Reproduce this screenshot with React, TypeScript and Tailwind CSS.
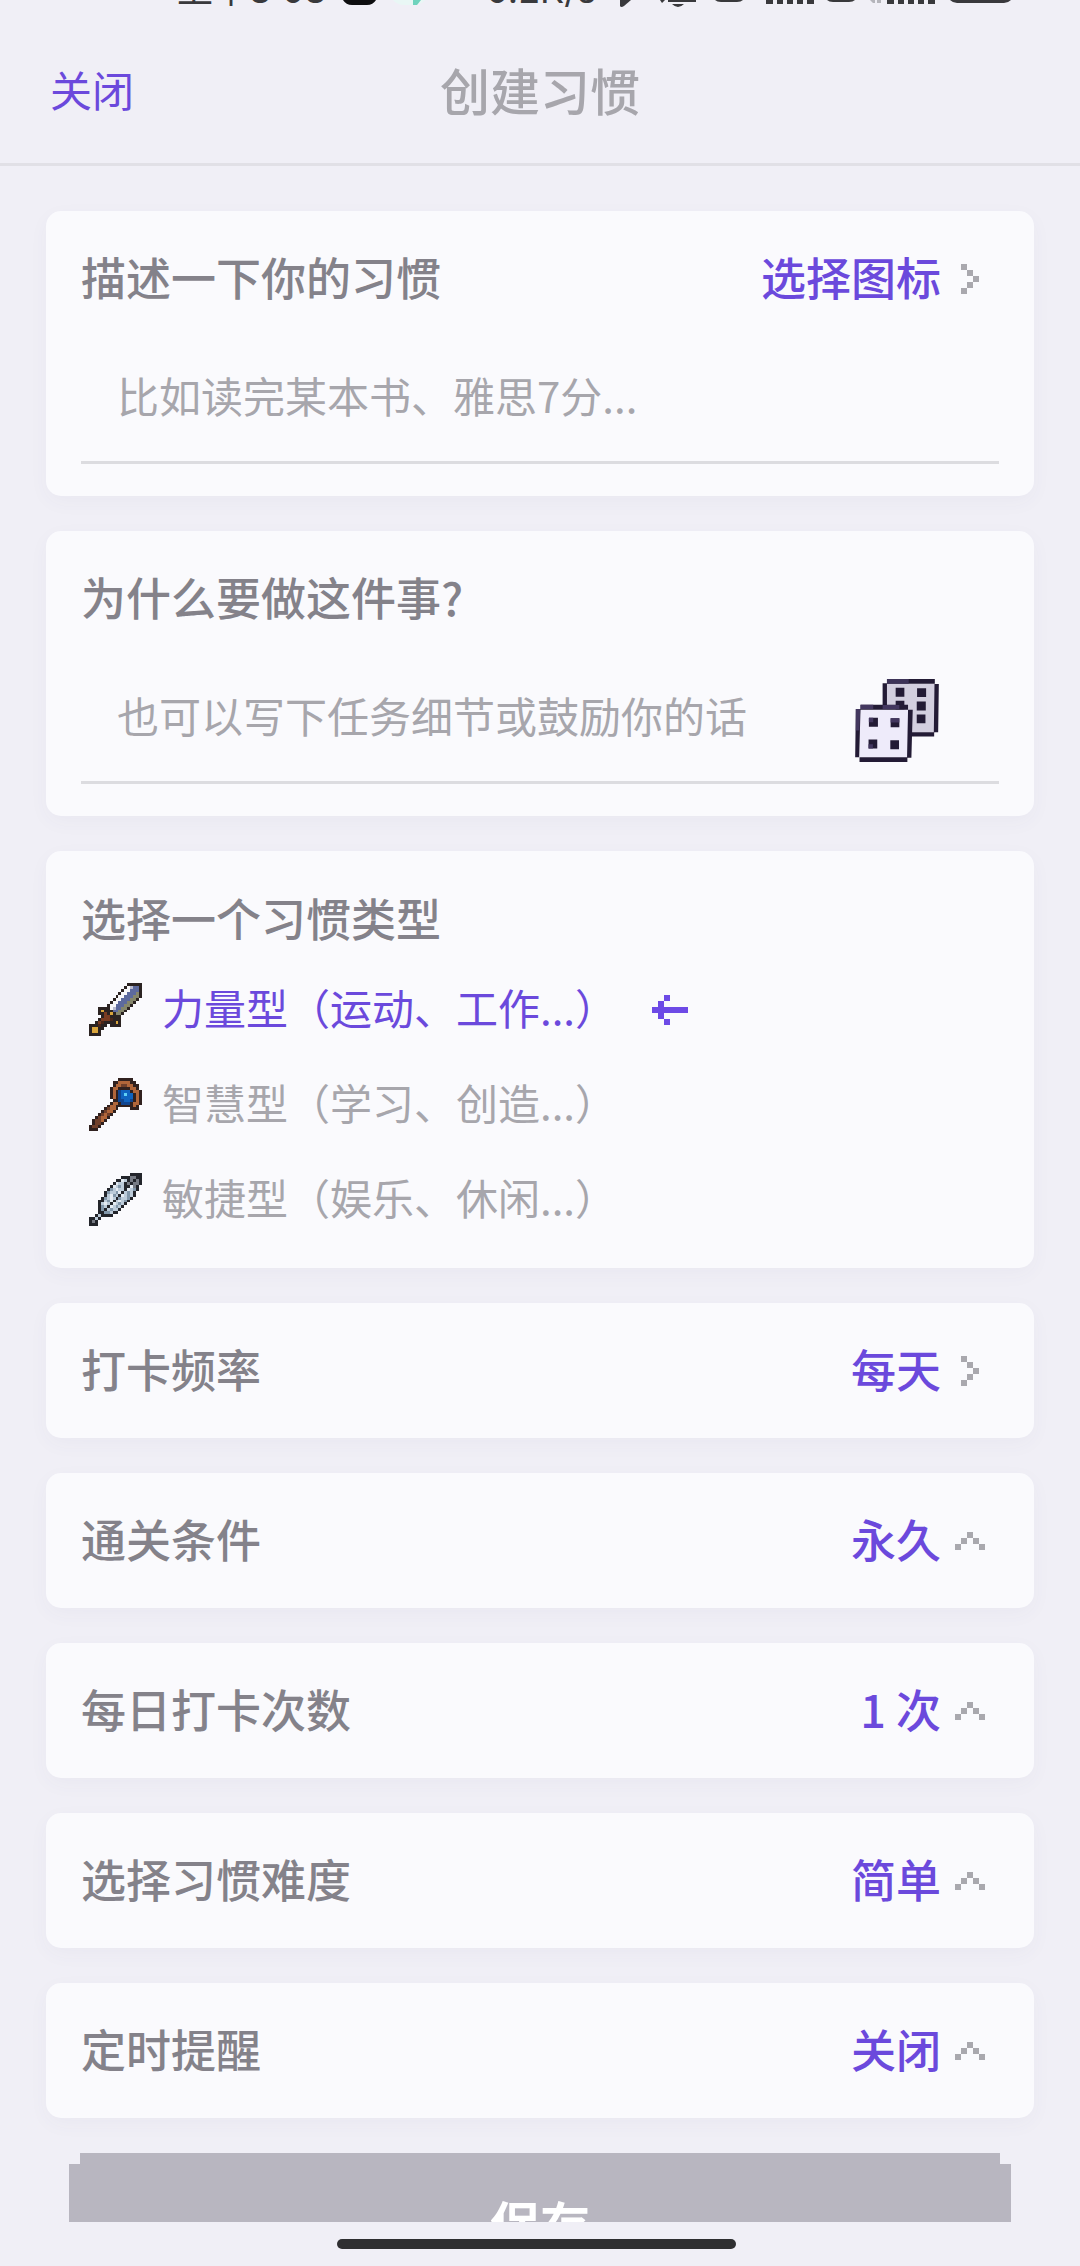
import React, { useState } from "react";

type Palette = Record<string, string>;

/* Draws a sprite from rows of characters; "." is transparent. */
function Sprite({ rows, palette, className }: { rows: string[]; palette: Palette; className: string }) {
  const width = Math.max(...rows.map((r) => r.length));
  return (
    <svg viewBox={`0 0 ${width} ${rows.length}`} className={className} shapeRendering="crispEdges" aria-hidden="true">
      {rows.flatMap((row, y) =>
        row.split("").map((c, x) =>
          c === "." ? null : <rect key={`${x}-${y}`} x={x} y={y} width={1} height={1} fill={palette[c]} />
        )
      )}
    </svg>
  );
}

const SWORD = [
  ".............KKKKK",
  "............KWLBBK",
  "...........KWWBBBK",
  "..........KWWBBBGK",
  ".........KWWBBBGGK",
  "........KWWBBBGGK.",
  ".......KWWBBBGGK..",
  "......KWWBBBGGK...",
  "...KKKKWLBBGGK....",
  "...KYKKKBBGGK.....",
  "...KKRKYKGGK......",
  "....KRRKKKK.......",
  "...KRRRDKKK.......",
  "..KRDKKKKYK.......",
  "KKKDKK.KKKK.......",
  "KYYKK.............",
  "KYYK..............",
  "KKKK..............",
];
const SWORD_COLORS: Palette = {
  K: "#2b2322", W: "#f8f8fa", L: "#b9bcd0", B: "#5d6a9e", G: "#85866c", Y: "#d9a53c", R: "#7a3c22", D: "#4a2618",
};

const STAFF = [
  "..........KKKKK...",
  "........KKOOOOKK..",
  "........KOONNOOKK.",
  ".......KOOKKKKOOK.",
  ".......KOKDBBBKOOK",
  ".......KOKDBCBBKOK",
  ".......KOKDBBBBKOK",
  "........KKDDBBDKOK",
  ".......KOOKDDDKOOK",
  "......KOOKKKKKKOK.",
  ".....KNOOK....KKK.",
  "....KNOOK.........",
  "...KNONK..........",
  "..KNOOK...........",
  ".KNNOK............",
  ".KNNK.............",
  "KNNK..............",
  "KKK...............",
];
const STAFF_COLORS: Palette = {
  K: "#30211f", O: "#b0663a", N: "#70402b", D: "#10458f", B: "#0f63bf", C: "#5fd0f5",
};

const FEATHER = [
  "..............KKKK",
  "...........KKKGGKK",
  ".........KKWLKGKGK",
  "........KWLLKGKGGK",
  ".......KWLSLKKWGK.",
  "......KSLWLLKWLSK.",
  ".....KSLLSWKLSLK..",
  ".....KLWSLKWLSLK..",
  "....KSLWLKSLLSK...",
  "...KKLSWKLWLSK....",
  "...KLWLKWLSLK.....",
  "...KSLKWLSLK......",
  "...KSKLSLLK.......",
  "...KKSSLKK........",
  "..KLKKKK..........",
  "KKLK..............",
  "KGK...............",
  "KKK...............",
];
const FEATHER_COLORS: Palette = { K: "#23252b", W: "#e4ebf2", L: "#bccbd9", S: "#8297aa", G: "#777b84" };

const GRAY: Palette = { X: "#a9a8ae" };
const VIOLET: Palette = { X: "#6d4ae6" };
const RIGHT = [".X...", "..X..", "...X.", "..X..", ".X..."];
const UP = [".....", "..X..", ".X.X.", "X...X", "....."];
const ARROW = ["..X...", ".X....", "XXXXXX", ".X....", "..X..."];

function Dice() {
  return (
    <svg viewBox="108 86 250 248" className="h-[83px] w-[84px]" aria-hidden="true">
      <rect x="203" y="100" width="143" height="146" fill="#d3cfdf" />
      <g fill="#231b35">
        <path d="M203 86H346V100H203zM190 99H203V175H190zM345 101H358L356 245H343zM270 245H344V258H270z" />
        <path d="M229 112H255V139H229zM293 114H320V140H293zM229 151H255V178H229zM292 153H319V180H292zM292 192H318V218H292z" />
      </g>
      <path d="M203 86H268V100H203z" fill="#3d3358" />
      <path d="M123 177H267L264 320H121z" fill="#eeebfa" />
      <g fill="#231b35">
        <path d="M124 163H266V178H124zM110 176H124L120 320H108zM266 178H280L276 321H263zM121 320H264V334H121z" />
        <path d="M149 202H176V229H149zM214 203H240V230H214zM148 267H174V294H148zM213 269H239V296H213z" />
      </g>
      <path d="M124 163H162V176H124zM190 164H240V176H190zM110 176H123L121 240H110zM149 202H162V215H149zM214 203H240V216H214zM148 281H161V294H148z" fill="#43375f" />
    </svg>
  );
}

function StatusIcons() {
  return (
    <svg viewBox="620 0 400 8" className="ml-[18px] h-[8px] w-[400px] shrink-0" fill="#39393c" aria-hidden="true">
      <path d="M623 0H634L627 6Q624 8 623 6z" />
      <path d="M663 0H668L665 3zM671 0H699V2H671zM675 4H687Q681 10 675 4z" />
      <path d="M718 0H746Q744 2 740 2H724Q720 2 718 0z" />
      <path d="M769 0H776V4H769zM780 0H786V4H780zM790 0H796V4H790zM800 0H806V4H800zM810 0H817V4H810z" />
      <path d="M830 0H858Q856 2 852 2H836Q832 2 830 0z" />
      <path d="M873 0H878V3H876zM880 0H884V3H880z" fill="#b5b5bb" />
      <path d="M890 0H897V4H890zM901 0H907V4H901zM911 0H917V4H911zM921 0H927V4H921zM931 0H938V4H931z" />
      <path d="M953 0H1014Q1011 3 1007 3H960Q956 3 953 0z" />
    </svg>
  );
}

const card = "rounded-[15px] bg-[#fafafd] px-[35px] shadow-[0_6px_20px_rgba(80,70,130,0.04)]";
const heading = "pb-[3px] text-[45px] leading-[60px] font-medium text-[#84828a]";
const value = "flex items-center gap-[14px] pr-[14px] text-[45px] leading-[60px] font-medium text-[#6b49dc]";
const field =
  "h-[104px] min-w-0 flex-1 bg-transparent pb-[7px] pl-[36px] text-[42px] text-[#84828a] outline-none placeholder:text-[#a7a6ac] placeholder:opacity-100";

function SettingRow({ label, text, rows }: { label: string; text: string; rows: string[] }) {
  return (
    <section className={card}>
      <button type="button" className="flex h-[135px] w-full items-center justify-between">
        <span className={heading}>{label}</span>
        <span className={value}>
          <span className="pb-[3px]">{text}</span>
          <Sprite rows={rows} palette={GRAY} className="size-[30px]" />
        </span>
      </button>
    </section>
  );
}

const TYPES = [
  { id: "power", label: "力量型（运动、工作...）", rows: SWORD, palette: SWORD_COLORS },
  { id: "wisdom", label: "智慧型（学习、创造...）", rows: STAFF, palette: STAFF_COLORS },
  { id: "agility", label: "敏捷型（娱乐、休闲...）", rows: FEATHER, palette: FEATHER_COLORS },
];

export default function App() {
  const [type, setType] = useState("power");
  return (
    <div className="flex h-screen flex-col bg-[#f0eff6] font-['Noto_Sans_CJK_SC',sans-serif]">
      <header className="border-b-[3px] border-[#e1e0e6]">
        <div className="flex h-[8px] items-end overflow-hidden pl-[177px] font-['Inter','Noto_Sans_CJK_SC',sans-serif] text-[36px] leading-[36px] whitespace-nowrap text-[#39393c]">
          <span className="w-[166px] shrink-0">上午8:08</span>
          <svg viewBox="0 0 84 8" className="h-[8px] w-[84px] shrink-0" aria-hidden="true">
            <path d="M0 0H33Q30 5 24 5H9Q3 5 0 0z" fill="#0e0e10" />
            <path d="M50 0H82Q78 5 70 5H62Q54 5 50 0z" fill="#e9f7f5" />
            <path d="M70 0H78L74 5H70z" fill="#6fd3bd" />
          </svg>
          <span className="ml-[59px] w-[113px] shrink-0">0.2K/s</span>
          <StatusIcons />
        </div>
        <div className="grid h-[155px] grid-cols-3 items-center px-[50px] pt-[6px]">
          <button type="button" className="justify-self-start text-[42px] leading-[60px] text-[#6b49dc]">
            关闭
          </button>
          <h1 className="text-center text-[50px] leading-[60px] font-medium text-[#a7a6ac]">创建习惯</h1>
        </div>
      </header>

      <main className="flex min-h-0 flex-1 flex-col gap-[35px] overflow-y-auto px-[46px] pt-[45px] [scrollbar-width:none] *:shrink-0">
        <section className={`${card} pb-[32px]`}>
          <div className="flex h-[135px] items-center justify-between">
            <label htmlFor="habit" className={heading}>描述一下你的习惯</label>
            <button type="button" className={value}>
              <span className="pb-[3px]">选择图标</span>
              <Sprite rows={RIGHT} palette={GRAY} className="size-[30px]" />
            </button>
          </div>
          <div className="flex border-b-[3px] border-[#dcdce0] pb-[11px]">
            <input id="habit" type="text" placeholder="比如读完某本书、雅思7分..." className={field} />
          </div>
        </section>

        <section className={`${card} pb-[32px]`}>
          <div className="flex h-[135px] items-center">
            <label htmlFor="reason" className={heading}>为什么要做这件事?</label>
          </div>
          <div className="flex items-center border-b-[3px] border-[#dcdce0] pb-[11px]">
            <input id="reason" type="text" placeholder="也可以写下任务细节或鼓励你的话" className={field} />
            <button type="button" aria-label="随机" className="mr-[60px] pt-[4px]">
              <Dice />
            </button>
          </div>
        </section>

        <section className={`${card} pt-[25px] pb-[21px]`}>
          <fieldset>
            <legend className={`flex h-[86px] items-center ${heading}`}>选择一个习惯类型</legend>
            {TYPES.map((t) => (
              <label
                key={t.id}
                className={`flex h-[95px] cursor-pointer items-center pl-[8px] text-[42px] leading-[60px] ${
                  type === t.id ? "text-[#6b49dc]" : "text-[#a7a6ac]"
                }`}
              >
                <input
                  type="radio"
                  name="habit-type"
                  value={t.id}
                  checked={type === t.id}
                  onChange={() => setType(t.id)}
                  className="sr-only"
                />
                <Sprite rows={t.rows} palette={t.palette} className="mr-[20px] size-[53px]" />
                <span className="min-w-[490px] pb-[6px]">{t.label}</span>
                {type === t.id && <Sprite rows={ARROW} palette={VIOLET} className="h-[30px] w-[36px]" />}
              </label>
            ))}
          </fieldset>
        </section>

        <SettingRow label="打卡频率" text="每天" rows={RIGHT} />
        <SettingRow label="通关条件" text="永久" rows={UP} />
        <SettingRow label="每日打卡次数" text="1 次" rows={UP} />
        <SettingRow label="选择习惯难度" text="简单" rows={UP} />
        <SettingRow label="定时提醒" text="关闭" rows={UP} />

        <button
          type="button"
          className="mx-[23px] h-[138px] bg-[#b8b6c0] text-[50px] font-bold text-white [clip-path:polygon(11px_0,calc(100%-11px)_0,calc(100%-11px)_11px,100%_11px,100%_calc(100%-11px),calc(100%-11px)_calc(100%-11px),calc(100%-11px)_100%,11px_100%,11px_calc(100%-11px),0_calc(100%-11px),0_11px,11px_11px)]"
        >
          保存
        </button>
      </main>

      <footer className="flex h-[44px] shrink-0 justify-center pt-[17px] pr-[8px]">
        <div className="h-[10px] w-[399px] rounded-full bg-[#2f2f31]" />
      </footer>
    </div>
  );
}
